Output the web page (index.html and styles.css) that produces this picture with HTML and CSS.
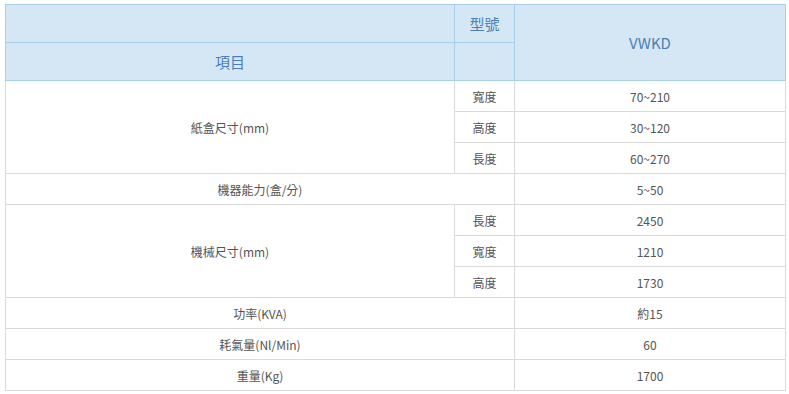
FILE: index.html
```html
<!DOCTYPE html>
<html lang="zh-Hant">
<head>
<meta charset="utf-8">
<link rel="stylesheet" href="styles.css">
</head>
<body>
<div class="wrap">
<table class="spec">
  <colgroup><col class="c1"><col class="c2"><col class="c3"></colgroup>
  <thead>
    <tr class="hrow"><th></th><th>型號</th><th rowspan="2" class="model">VWKD</th></tr>
    <tr class="hrow"><th class="item">項目</th><th></th></tr>
  </thead>
  <tbody>
    <tr><td rowspan="3">紙盒尺寸(mm)</td><td>寬度</td><td>70~210</td></tr>
    <tr><td>高度</td><td>30~120</td></tr>
    <tr><td>長度</td><td>60~270</td></tr>
    <tr><td colspan="2">機器能力(盒/分)</td><td>5~50</td></tr>
    <tr><td rowspan="3">機械尺寸(mm)</td><td>長度</td><td>2450</td></tr>
    <tr><td>寬度</td><td>1210</td></tr>
    <tr><td>高度</td><td>1730</td></tr>
    <tr><td colspan="2">功率(KVA)</td><td>約15</td></tr>
    <tr><td colspan="2">耗氣量(Nl/Min)</td><td>60</td></tr>
    <tr><td colspan="2">重量(Kg)</td><td>1700</td></tr>
  </tbody>
</table>
</div>
</body>
</html>
```
FILE: styles.css
```css
html, body { margin: 0; padding: 0; background: #fff; }
.wrap { padding: 4px 5px; }
.spec {
  border-collapse: collapse;
  width: 780px;
  table-layout: fixed;
  font-family: "Noto Sans CJK TC", "Noto Sans", sans-serif;
}
.c1 { width: 449px; }
.c2 { width: 60px; }
.c3 { width: 271px; }
.spec th {
  background: #d5e7f5;
  border: 1px solid #a7cfea;
  color: #4b7fb3;
  font-weight: normal;
  font-size: 15px;
  text-align: center;
  vertical-align: middle;
  padding: 0;
  height: 37px;
}
.spec th.model { font-size: 15px; }
.spec td {
  border: 1px solid #dadada;
  color: #555;
  font-size: 12px;
  text-align: center;
  vertical-align: middle;
  padding: 0;
  height: 30px;
}
```
